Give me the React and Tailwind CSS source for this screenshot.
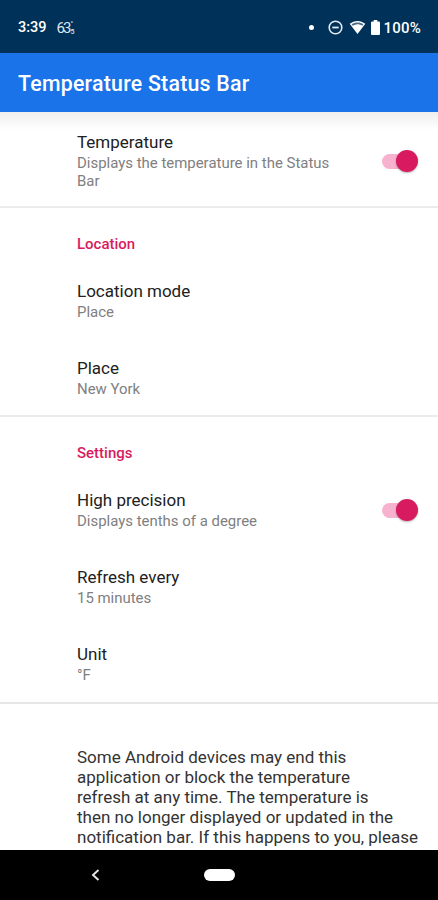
function Switch() {
  return (
    <div className="relative flex h-[22px] w-9 shrink-0 items-center">
      <div className="h-[15px] w-[32px] rounded-full bg-[#f6b2ce]" />
      <div className="absolute top-0 right-0 size-[22px] rounded-full bg-[#d81b60] shadow-[0_1px_2px_rgba(0,0,0,0.3)]" />
    </div>
  );
}

function Preference({ title, summary, toggle }) {
  return (
    <div className="h-[77px] pr-5 pl-[77px]">
      <div className="flex items-center justify-between">
        <div className="w-[262px]">
          <div className="text-[17px] leading-5 text-[#212121]">{title}</div>
          <div className="pt-[3px] text-[14.95px] leading-[17.5px] text-[#808080]">{summary}</div>
        </div>
        {toggle && <Switch />}
      </div>
    </div>
  );
}

function Category({ children }) {
  return (
    <div className="h-[47px] pl-[77px] text-[15px] leading-5 font-medium text-[#d81b60]">{children}</div>
  );
}

function StatusBar() {
  return (
    <header className="flex h-[53px] items-center bg-[#003158] pt-[2px] pr-[17px] pl-[18px] text-white">
      <span className="text-[14.500px] leading-5 font-medium">3:39</span>
      <div className="ml-[10px] flex h-4 w-[18px] items-center text-[#dce6ef]">
        <span className="w-[13px] text-[15px] leading-4 tracking-[-2px]">63</span>
        <div className="flex flex-col pl-px text-[7px] leading-[8px] font-medium">
          <span>°</span>
          <span>5</span>
        </div>
      </div>
      <div className="ml-auto flex items-center">
        <span className="size-[5px] rounded-full bg-white" />
        <svg className="ml-[14px]" width="15" height="15" viewBox="0 0 15 15" fill="none" stroke="#e3ebf3" strokeWidth="1.600">
          <circle cx="7.5" cy="7.5" r="6.3" />
          <path d="M4.3 7.5h6.4" strokeWidth="1.8" />
        </svg>
        <svg className="ml-[6px]" width="17" height="15" viewBox="0 0 17 15">
          <path d="M.7 3.8C5.2-.1 11.8-.1 16.3 3.8L8.5 14Z" fill="#fff" />
          <path d="M2.600 4.300C6 1.800 11 1.800 14.400 4.300l-1.1 1.4C10.3 3.700 6.700 3.700 3.700 5.700Z" fill="#4a6b88" />
        </svg>
        <svg className="ml-[5px]" width="9" height="15" viewBox="0 0 9 15" fill="#fff">
          <path d="M2.7 0h3.6v1.5H8a1 1 0 0 1 1 1V14a1 1 0 0 1-1 1H1a1 1 0 0 1-1-1V2.5a1 1 0 0 1 1-1h1.7Z" />
        </svg>
        <span className="ml-[4px] text-[15px] leading-5 font-medium tracking-[0.2px]">100%</span>
      </div>
    </header>
  );
}

export default function App() {
  return (
    <div className="flex h-[900px] w-[438px] flex-col overflow-hidden bg-white font-['Roboto',sans-serif]">
      <StatusBar />
      <div className="flex h-[59px] shrink-0 items-center bg-[#1a73e8] pt-[3px] pl-[18px] text-[21.3px] font-medium tracking-[0.25px] text-white">
        Temperature Status Bar
      </div>
      <main className="h-[738px] shrink-0 overflow-hidden">
        <div className="h-[94px] bg-linear-to-b from-[#eeeeee] to-white to-[18px] pt-5">
          <Preference title="Temperature" summary="Displays the temperature in the Status Bar" toggle />
        </div>
        <section className="h-[209px] border-t-2 border-[#ebebeb] pt-[26px]">
          <Category>Location</Category>
          <Preference title="Location mode" summary="Place" />
          <Preference title="Place" summary="New York" />
        </section>
        <section className="h-[287px] border-t-2 border-[#ebebeb] pt-[26px]">
          <Category>Settings</Category>
          <Preference title="High precision" summary="Displays tenths of a degree" toggle />
          <Preference title="Refresh every" summary="15 minutes" />
          <Preference title="Unit" summary="°F" />
        </section>
        <section className="border-t-2 border-[#e6e6e6] pt-[43px] pl-[77px] text-[17px] leading-5 text-[#333333]">
          <p className="whitespace-nowrap">
            Some Android devices may end this
            <br />
            application or block the temperature
            <br />
            refresh at any time. The temperature is
            <br />
            then no longer displayed or updated in the
            <br />
            notification bar. If this happens to you, please
          </p>
        </section>
      </main>
      <nav className="flex h-[50px] shrink-0 items-center bg-black pl-[91px]">
        <svg width="9" height="12" viewBox="0 0 9 12" fill="none" stroke="#e8e8e8" strokeWidth="1.9">
          <path d="M7.5 1 2 6l5.500 5" />
        </svg>
        <div className="ml-[104px] h-3 w-[31px] rounded-full bg-white" />
      </nav>
    </div>
  );
}
